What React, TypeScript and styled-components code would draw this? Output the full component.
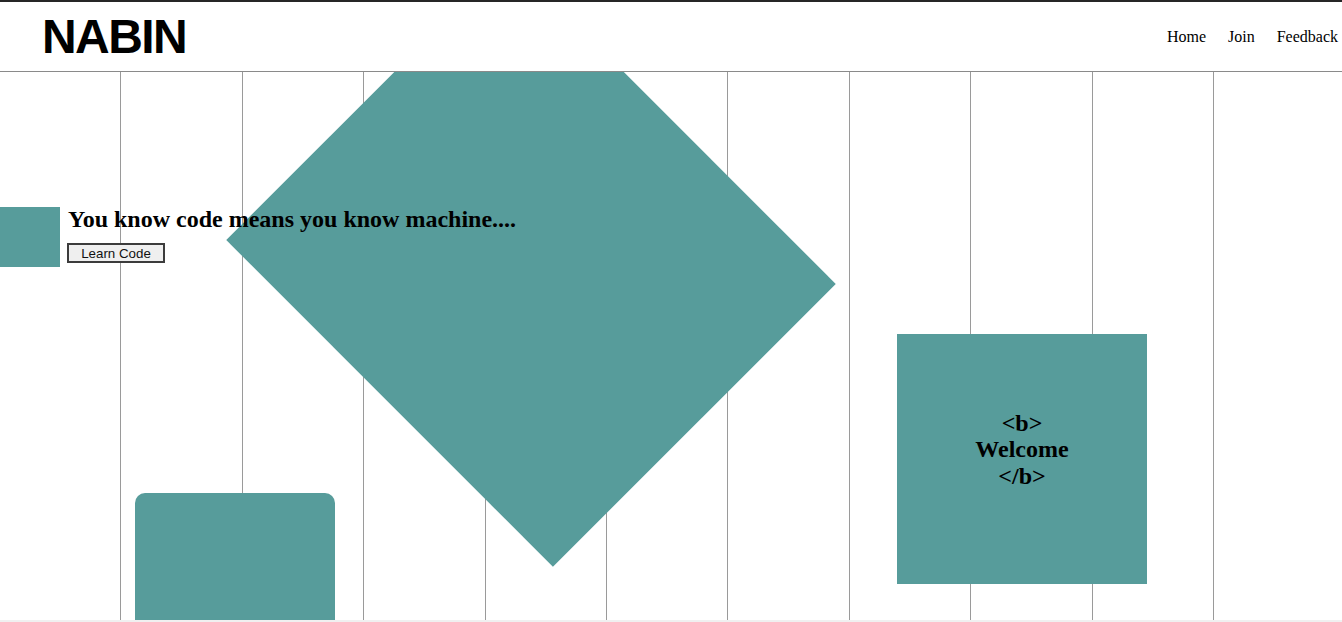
import styled, { createGlobalStyle } from "styled-components";

const GlobalStyle = createGlobalStyle`
  html, body {
    margin: 0;
    padding: 0;
    background: #ffffff;
    overflow: hidden;
  }
  body {
    font-family: "Liberation Serif", "Times New Roman", serif;
    color: #000;
  }
`;

const teal = "#579c9b";

const Header = styled.header`
  height: 69px;
  display: flex;
  align-items: center;
  justify-content: space-between;
  padding: 0 4px 0 42px;
  border-top: 2px solid #262626;
  border-bottom: 1px solid #8a8a8a;
  background: #fff;
`;

const Logo = styled.h1`
  margin: 0;
  font-family: "Liberation Sans", Arial, sans-serif;
  font-size: 48px;
  font-weight: 700;
  letter-spacing: -1.6px;
`;

const NavList = styled.ul`
  display: flex;
  gap: 22px;
  list-style: none;
  margin: 0;
  padding: 0;
  font-size: 16px;
`;

const NavItem = styled.li`
  cursor: pointer;
`;

const Stage = styled.main`
  position: relative;
  height: 548px;
  overflow: hidden;
`;

const Columns = styled.div`
  position: absolute;
  inset: 0;
  display: flex;
`;

const Column = styled.div`
  box-sizing: border-box;
  width: 121.4px;
  flex: none;
  border-right: 1px solid #9a9a9a;
`;

const Shape = styled.div<{ $round?: boolean }>`
  position: absolute;
  background: ${teal};
  border-radius: ${(p) => (p.$round ? "10px" : "0")};
`;

const Diamond = styled(Shape)`
  left: 300px;
  top: -10px;
  width: 462px;
  height: 400px;
  transform: rotate(45deg);
`;

const Card = styled(Shape)`
  left: 135px;
  top: 421px;
  width: 200px;
  height: 200px;
`;

const WelcomeBox = styled(Shape)`
  left: 897px;
  top: 262px;
  width: 250px;
  height: 250px;
  box-sizing: border-box;
  padding-bottom: 19px;
  display: flex;
  align-items: center;
  justify-content: center;
  text-align: center;
  font-size: 24px;
  font-weight: 700;
  line-height: 26.5px;
`;

const Hero = styled.section`
  position: relative;
  display: flex;
  align-items: flex-start;
  gap: 7px;
  padding-top: 135px;
`;

const Block = styled.div`
  width: 60px;
  height: 60px;
  flex: none;
  background: ${teal};
`;

const HeroText = styled.div`
  margin-top: -1px;
  display: flex;
  flex-direction: column;
  align-items: flex-start;
  gap: 10px;
`;

const Title = styled.h2`
  margin: 0 0 0 1px;
  font-size: 24px;
  font-weight: 700;
`;

const Button = styled.button`
  box-sizing: border-box;
  width: 98px;
  height: 20px;
  padding: 2px 0 0;
  border: 2px solid #3c3c3c;
  background: #efefef;
  color: #111;
  font-family: "Liberation Sans", Arial, sans-serif;
  font-size: 13.33px;
  line-height: 14px;
  cursor: pointer;
`;

const Footer = styled.div`
  height: 2px;
  background: #f0f0f0;
`;

const links = ["Home", "Join", "Feedback"];

const App = () => {
  return (
    <>
      <GlobalStyle />
      <Header>
        <Logo>NABIN</Logo>
        <nav>
          <NavList>
            {links.map((l) => (
              <NavItem key={l}>{l}</NavItem>
            ))}
          </NavList>
        </nav>
      </Header>
      <Stage>
        <Columns>
          {Array.from({ length: 10 }).map((_, i) => (
            <Column key={i} />
          ))}
        </Columns>
        <Diamond />
        <Card $round />
        <WelcomeBox>
          {"<b>"}
          <br />
          Welcome
          <br />
          {"</b>"}
        </WelcomeBox>
        <Hero>
          <Block />
          <HeroText>
            <Title>You know code means you know machine....</Title>
            <Button>Learn Code</Button>
          </HeroText>
        </Hero>
      </Stage>
      <Footer />
    </>
  );
};

export default App;
